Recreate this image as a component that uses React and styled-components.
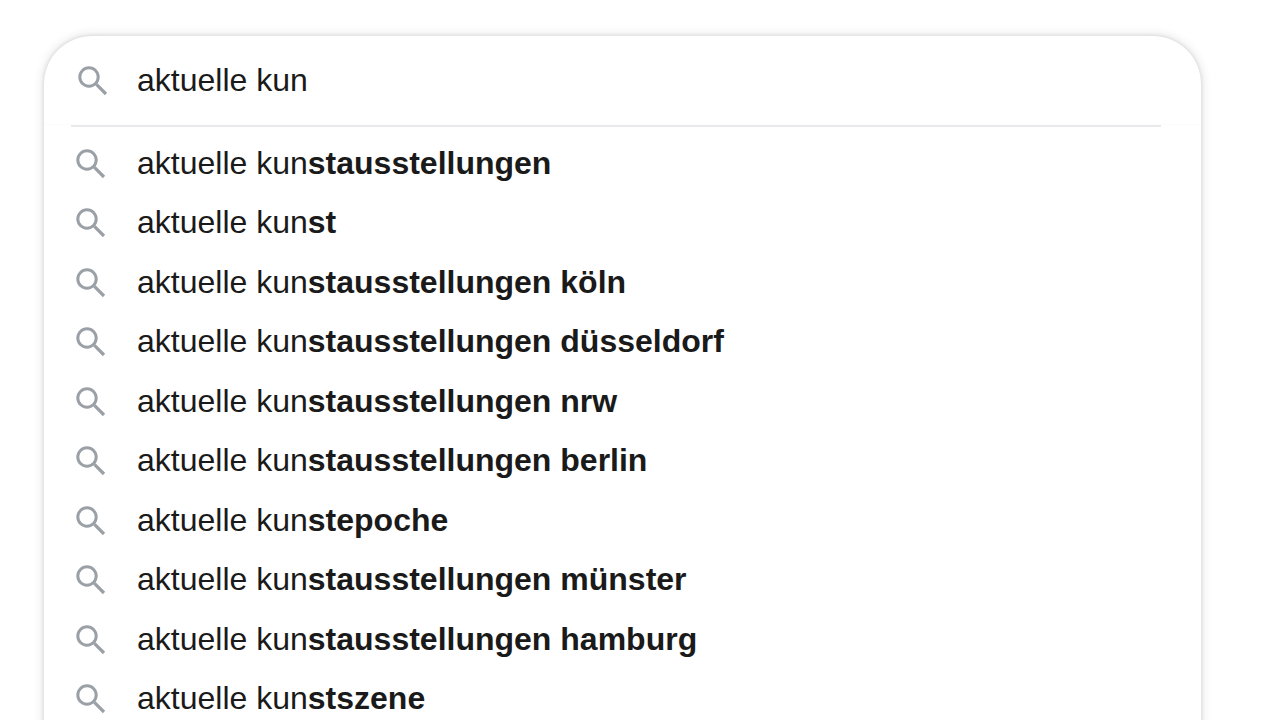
import React, { useState } from "react";
import styled, { createGlobalStyle } from "styled-components";

const GlobalStyle = createGlobalStyle`
  *, *::before, *::after { box-sizing: border-box; }
  body {
    margin: 0;
    background: #fff;
    color: #1a1a1a;
    font-family: "Liberation Sans", Arial, sans-serif;
    overflow-x: hidden;
    scrollbar-width: none;
  }
`;

const Page = styled.main`
  padding: 36px 79px 0 44px;
`;

const Panel = styled.form`
  padding-bottom: 32px;
  background: #fff;
  border-radius: 48px 48px 0 0;
  box-shadow: 0 0 4px rgba(32, 33, 36, 0.14), 0 0 12px rgba(32, 33, 36, 0.14);
`;

const SearchRow = styled.label`
  display: flex;
  align-items: center;
  gap: 24px;
  height: 89px;
  padding: 0 29px;
  border-bottom: 1px solid #fcfcfc;
`;

const SearchInput = styled.input`
  flex: 1;
  min-width: 0;
  padding: 0;
  border: 0;
  outline: 0;
  background: transparent;
  color: inherit;
  font: inherit;
  font-size: 32px;
  line-height: 40px;
`;

const Divider = styled.hr`
  height: 2px;
  margin: 0 40px 0 27px;
  border: 0;
  background: #e8eaed;
`;

const Suggestions = styled.ul`
  display: grid;
  grid-auto-rows: 1fr;
  height: 595px;
  margin: 6px 0 0;
  padding: 0;
  list-style: none;
`;

const Suggestion = styled.button`
  display: flex;
  align-items: center;
  gap: 26px;
  width: 100%;
  height: 100%;
  padding: 0 27px;
  border: 0;
  background: transparent;
  color: inherit;
  font: inherit;
  font-size: 32px;
  line-height: 40px;
  text-align: left;
`;

const Icon = styled.svg`
  flex: none;
  width: 40px;
  height: 40px;
  fill: none;
  stroke: #9aa0a6;
`;

const prefix = "aktuelle kun";
const endings = [
  "stausstellungen",
  "st",
  "stausstellungen köln",
  "stausstellungen düsseldorf",
  "stausstellungen nrw",
  "stausstellungen berlin",
  "stepoche",
  "stausstellungen münster",
  "stausstellungen hamburg",
  "stszene",
];

function SearchIcon() {
  return (
    <Icon viewBox="0 0 40 40" aria-hidden="true">
      <circle cx="16" cy="17" r="9.2" strokeWidth="3" />
      <path d="M23.4 24.4 L33 34" strokeWidth="3.2" />
    </Icon>
  );
}

export default function App() {
  const [query, setQuery] = useState(prefix);
  return (
    <Page>
      <GlobalStyle />
      <Panel role="search" onSubmit={(e) => e.preventDefault()}>
        <SearchRow>
          <SearchIcon />
          <SearchInput
            type="text"
            aria-label="Suche"
            value={query}
            onChange={(e) => setQuery(e.target.value)}
          />
        </SearchRow>
        <Divider />
        <Suggestions>
          {endings.map((ending) => (
            <li key={ending}>
              <Suggestion type="button" onClick={() => setQuery(prefix + ending)}>
                <SearchIcon />
                <span>{prefix}<b>{ending}</b></span>
              </Suggestion>
            </li>
          ))}
        </Suggestions>
      </Panel>
    </Page>
  );
}
